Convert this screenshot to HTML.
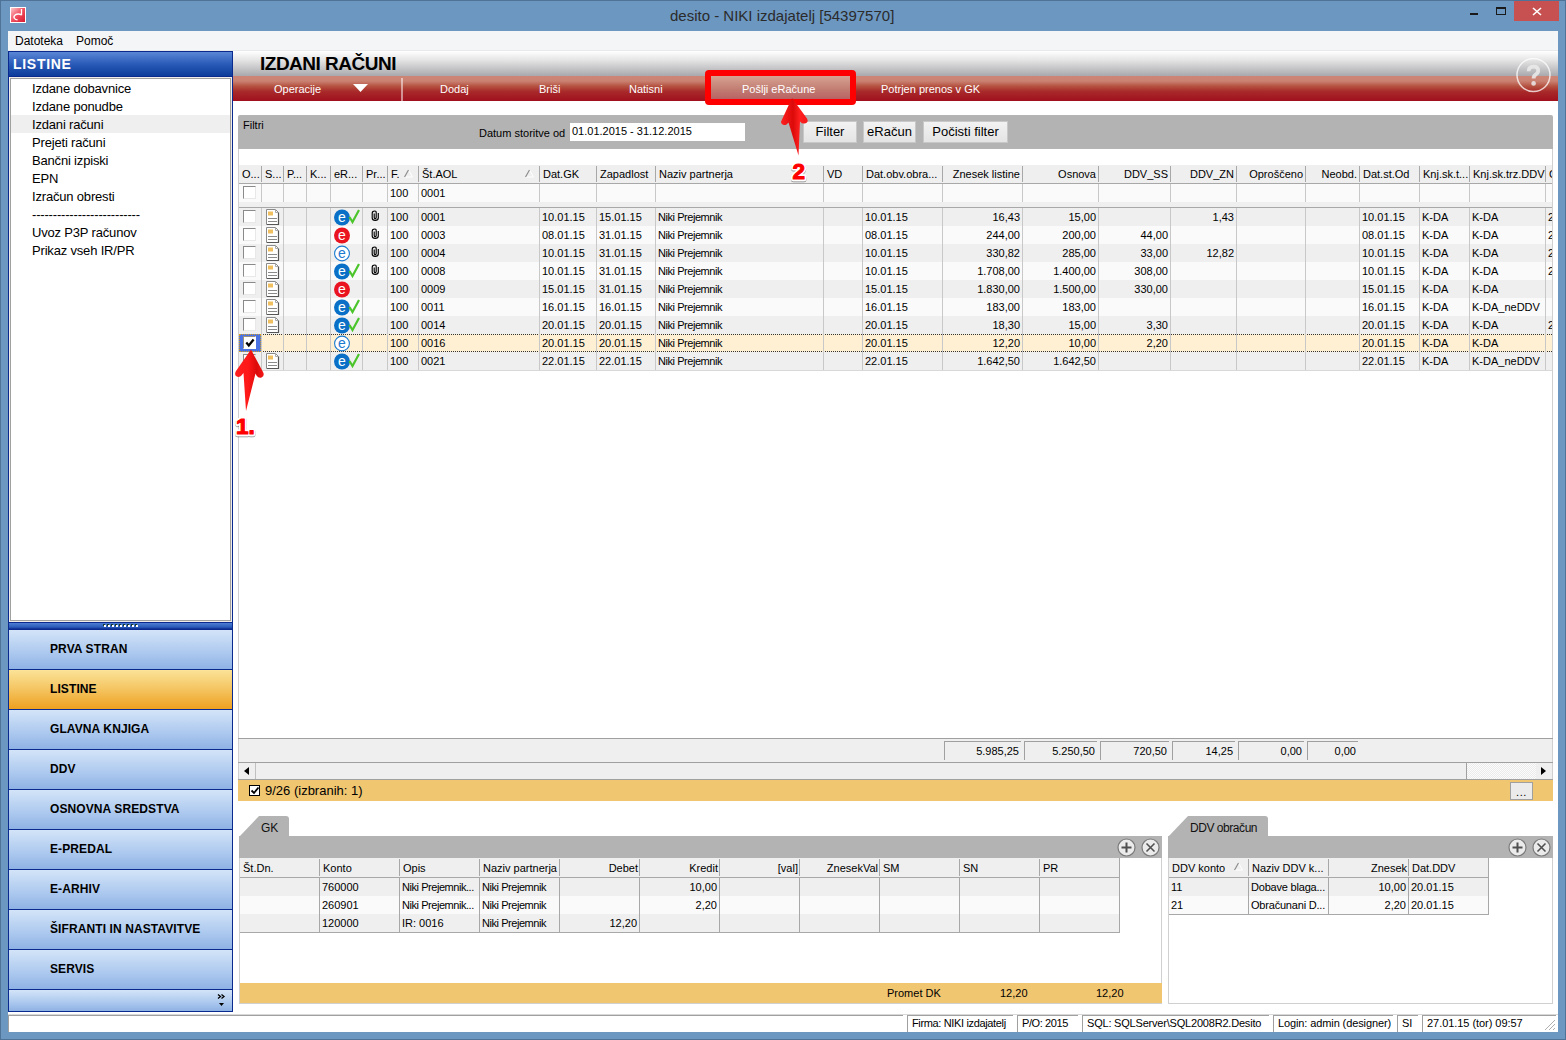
<!DOCTYPE html>
<html><head><meta charset="utf-8"><style>
*{box-sizing:border-box;margin:0;padding:0}
html,body{width:1566px;height:1040px;overflow:hidden}
body{position:relative;background:#6b97c1;font-family:"Liberation Sans",sans-serif;font-size:11px;color:#000}
.a{position:absolute}
.t{position:absolute;white-space:nowrap;line-height:1}
#outer{left:0;top:0;width:1566px;height:1040px;border:1px solid #4f7397}
#client{left:8px;top:31px;width:1550px;height:1001px;background:#fff}
#menubar{left:8px;top:31px;width:1550px;height:20px;background:#f4f5f7;border-bottom:1px solid #e8e9eb}
#lp{left:8px;top:51px;width:225px;height:961px;background:#0a2a90}
#lphead{left:9px;top:52px;width:223px;height:24px;background:linear-gradient(#5a86d6,#2a5bb8 50%,#0d3c9a)}
#lplist{left:9px;top:77px;width:223px;height:545px;background:#fff;border:1px solid #f0ede8}
#lpin{left:0;top:0;width:221px;height:543px;border:1px solid #a0a0a0}
.li{position:absolute;left:21px;font-size:13px;letter-spacing:-0.18px;line-height:18px;height:18px;white-space:nowrap}
#split{left:9px;top:623px;width:223px;height:7px;background:linear-gradient(#4c7fd4,#2a5ab8 60%,#0a2a90 86%,#0a2a90)}
.nb{position:absolute;left:9px;width:223px;height:39px;background:linear-gradient(#d3e4f8,#b2cdf0 50%,#8fb2e5);}
.nb span{position:absolute;left:41px;top:13px;font-weight:bold;font-size:12px;letter-spacing:0.1px;white-space:nowrap;line-height:1}
.nb.sel{background:linear-gradient(#fbe398,#f4c460 50%,#efa020)}
#mhead{left:233px;top:51px;width:1325px;height:25px;background:linear-gradient(#ffffff,#e6e6e6 35%,#a9a9ad)}
#redbar{left:233px;top:76px;width:1325px;height:25px;background:linear-gradient(#cd8676 0%,#ca8272 20%,#b4503f 42%,#a82a2a 62%,#a0101e 100%)}
.rb{position:absolute;top:84px;color:#fff;font-size:11px;white-space:nowrap;line-height:1}
.btn{position:absolute;top:121px;height:22px;background:linear-gradient(#f2f2f2,#e4e4e4);border:1px solid #c8c8c8;font-size:13px;text-align:center;line-height:20px}
.hc{position:absolute;top:166px;height:16px;font-size:11px;line-height:16px;white-space:nowrap;overflow:hidden;padding:0 3px}
.vl{position:absolute;width:1px;background:#c8c8c8}
.hl{position:absolute;height:1px;background:#a0a0a0}
.c{position:absolute;font-size:11px;line-height:18px;height:18px;white-space:nowrap;overflow:hidden;padding:0 2px}
.ch{padding:0 3px}
.tight{letter-spacing:-0.2px}
.np{letter-spacing:-0.45px}
.hc.r{padding-right:2px}
.ch.r{padding-right:1px}
.r{text-align:right}
.cb{position:absolute;width:13px;height:13px;background:#fff;border:1px solid #8a8a8a;border-right-color:#e8e8e8;border-bottom-color:#e8e8e8}
</style></head><body>
<div class="a" id="outer"></div>
<div class="a" id="client"></div>
<div class="a" style="left:10px;top:7px;width:16px;height:16px;background:#fff"></div>
<div class="a" style="left:11px;top:8px;width:14px;height:14px;background:linear-gradient(135deg,#ffc8cc,#f05060 50%,#d81830)"></div><svg class="a" style="left:10px;top:7px" width="16" height="16"><path d="M11.5 2V8.3M11.5 7.8Q8 6.2 5.2 7.9Q3.2 9.6 4.4 11.3Q5.4 12.6 7.6 12.9" fill="none" stroke="#fff" stroke-width="1.3"/></svg>
<div class="t" style="left:670px;top:8px;font-size:15px;color:#2b2b2b">desito - NIKI izdajatelj [54397570]</div>
<div class="a" style="left:1470px;top:13px;width:8px;height:2px;background:#1a1a1a"></div>
<div class="a" style="left:1496px;top:7px;width:10px;height:8px;border:1px solid #1a1a1a;border-top-width:2px"></div>
<div class="a" style="left:1514px;top:1px;width:45px;height:20px;background:#c75050"></div>
<svg class="a" style="left:1532px;top:7px" width="10" height="9"><path d="M1 1L9 8M9 1L1 8" stroke="#fff" stroke-width="1.6"/></svg>
<div class="a" id="menubar"></div>
<div class="t" style="left:15px;top:35px;font-size:12px">Datoteka</div>
<div class="t" style="left:76px;top:35px;font-size:12px">Pomoč</div>
<div class="a" id="lp"></div>
<div class="a" id="lphead"></div>
<div class="t" style="left:13px;top:57px;font-size:14px;font-weight:bold;color:#fff;letter-spacing:0.7px">LISTINE</div>
<div class="a" id="lplist"><div class="a" id="lpin">
 <div class="a" style="left:0;top:36px;width:219px;height:18px;background:#efefef"></div>
 <div class="li" style="top:1px">Izdane dobavnice</div>
 <div class="li" style="top:19px">Izdane ponudbe</div>
 <div class="li" style="top:37px">Izdani računi</div>
 <div class="li" style="top:55px">Prejeti računi</div>
 <div class="li" style="top:73px">Bančni izpiski</div>
 <div class="li" style="top:91px">EPN</div>
 <div class="li" style="top:109px">Izračun obresti</div>
 <div class="li" style="top:127px">--------------------------</div>
 <div class="li" style="top:145px">Uvoz P3P računov</div>
 <div class="li" style="top:163px">Prikaz vseh IR/PR</div>
</div></div>
<div class="a" id="split"></div>
<div class="nb" style="top:630px"><span>PRVA STRAN</span></div>
<div class="nb sel" style="top:670px"><span>LISTINE</span></div>
<div class="nb" style="top:710px"><span>GLAVNA KNJIGA</span></div>
<div class="nb" style="top:750px"><span>DDV</span></div>
<div class="nb" style="top:790px"><span>OSNOVNA SREDSTVA</span></div>
<div class="nb" style="top:830px"><span>E-PREDAL</span></div>
<div class="nb" style="top:870px"><span>E-ARHIV</span></div>
<div class="nb" style="top:910px"><span>ŠIFRANTI IN NASTAVITVE</span></div>
<div class="nb" style="top:950px"><span>SERVIS</span></div>
<div class="nb" style="top:990px;height:21px"></div>
<svg class="a" style="left:217px;top:993px" width="10" height="15"><path d="M1 1.5L3.5 3.5L1 5.5M4.5 1.5L7 3.5L4.5 5.5" fill="none" stroke="#000" stroke-width="1.3"/><path d="M2 10H7L4.5 13Z" fill="#000"/></svg>
<div class="a" style="left:103px;top:624px;width:2px;height:2px;background:#1a3a2a"></div><div class="a" style="left:104px;top:625px;width:2px;height:2px;background:#fff"></div><div class="a" style="left:107px;top:624px;width:2px;height:2px;background:#1a3a2a"></div><div class="a" style="left:108px;top:625px;width:2px;height:2px;background:#fff"></div><div class="a" style="left:111px;top:624px;width:2px;height:2px;background:#1a3a2a"></div><div class="a" style="left:112px;top:625px;width:2px;height:2px;background:#fff"></div><div class="a" style="left:115px;top:624px;width:2px;height:2px;background:#1a3a2a"></div><div class="a" style="left:116px;top:625px;width:2px;height:2px;background:#fff"></div><div class="a" style="left:119px;top:624px;width:2px;height:2px;background:#1a3a2a"></div><div class="a" style="left:120px;top:625px;width:2px;height:2px;background:#fff"></div><div class="a" style="left:123px;top:624px;width:2px;height:2px;background:#1a3a2a"></div><div class="a" style="left:124px;top:625px;width:2px;height:2px;background:#fff"></div><div class="a" style="left:127px;top:624px;width:2px;height:2px;background:#1a3a2a"></div><div class="a" style="left:128px;top:625px;width:2px;height:2px;background:#fff"></div><div class="a" style="left:131px;top:624px;width:2px;height:2px;background:#1a3a2a"></div><div class="a" style="left:132px;top:625px;width:2px;height:2px;background:#fff"></div><div class="a" style="left:135px;top:624px;width:2px;height:2px;background:#1a3a2a"></div><div class="a" style="left:136px;top:625px;width:2px;height:2px;background:#fff"></div>
<div class="a" id="mhead"></div>
<div class="t" style="left:260px;top:54px;font-size:19px;font-weight:bold;color:#000;letter-spacing:-0.5px">IZDANI RAČUNI</div>
<div class="a" id="redbar"></div>
<div class="rb" style="left:274px">Operacije</div>
<svg class="a" style="left:353px;top:84px" width="16" height="9"><path d="M0 0H15L7.5 8Z" fill="#fff"/></svg>
<div class="a" style="left:401px;top:78px;width:2px;height:23px;background:rgba(255,255,255,0.5)"></div>
<div class="rb" style="left:440px">Dodaj</div>
<div class="rb" style="left:539px">Briši</div>
<div class="rb" style="left:629px">Natisni</div>
<div class="rb" style="left:742px">Pošlji eRačune</div>
<div class="rb" style="left:881px">Potrjen prenos v GK</div>
<svg class="a" style="left:1516px;top:58px" width="36" height="36"><circle cx="17.5" cy="17" r="16.5" fill="none" stroke="rgba(255,255,255,0.75)" stroke-width="1.5"/><path d="M12.6 13.2Q12.6 8.6 17.5 8.6Q22.2 8.6 22.2 12.6Q22.2 15.2 19.6 16.6Q17.6 17.8 17.6 20.6" fill="none" stroke="rgba(235,235,235,0.85)" stroke-width="3.8" stroke-linecap="butt"/><circle cx="17.6" cy="25.4" r="2.3" fill="rgba(235,235,235,0.85)"/></svg>

<div class="a" style="left:238px;top:115px;width:1315px;height:34px;background:#b3b3b3;border-radius:2px 2px 0 0"></div>
<div class="t" style="left:243px;top:120px;font-size:11px">Filtri</div>
<div class="t" style="left:479px;top:128px;font-size:11px">Datum storitve od</div>
<div class="a" style="left:570px;top:123px;width:175px;height:18px;background:#fff"></div>
<div class="t" style="left:572px;top:126px;font-size:11px">01.01.2015 - 31.12.2015</div>
<div class="btn" style="left:803px;width:54px">Filter</div>
<div class="btn" style="left:863px;width:53px">eRačun</div>
<div class="btn" style="left:923px;width:85px">Počisti filter</div>

<div class="a" style="left:238px;top:149px;width:1315px;height:590px;border-left:1px solid #d0d0d0;border-right:1px solid #d0d0d0"></div>
<div class="a" style="left:239px;top:165px;width:1313px;height:18px;background:#efefef"></div>
<div class="hl" style="left:239px;top:183px;width:1313px;background:#a8a8a8"></div>
<div class="hc" style="left:239px;width:22px">O...</div>
<div class="hc" style="left:262px;width:21px">S...</div>
<div class="hc" style="left:284px;width:22px">P...</div>
<div class="hc" style="left:307px;width:23px">K...</div>
<div class="hc" style="left:331px;width:31px">eR...</div>
<div class="hc" style="left:363px;width:24px">Pr...</div>
<div class="hc" style="left:388px;width:30px">F.</div>
<div class="hc" style="left:419px;width:120px">Št.AOL</div>
<div class="hc" style="left:540px;width:56px">Dat.GK</div>
<div class="hc" style="left:597px;width:58px">Zapadlost</div>
<div class="hc" style="left:656px;width:167px">Naziv partnerja</div>
<div class="hc" style="left:824px;width:38px">VD</div>
<div class="hc" style="left:863px;width:79px">Dat.obv.obra...</div>
<div class="hc r" style="left:943px;width:79px">Znesek listine</div>
<div class="hc r" style="left:1023px;width:75px">Osnova</div>
<div class="hc r" style="left:1099px;width:71px">DDV_SS</div>
<div class="hc r" style="left:1171px;width:65px">DDV_ZN</div>
<div class="hc r" style="left:1237px;width:68px">Oproščeno</div>
<div class="hc r" style="left:1306px;width:53px">Neobd.</div>
<div class="hc" style="left:1360px;width:59px">Dat.st.Od</div>
<div class="hc" style="left:1420px;width:49px">Knj.sk.t...</div>
<div class="hc" style="left:1470px;width:75px">Knj.sk.trz.DDV</div>
<div class="hc" style="left:1546px;width:6px">C</div>
<div class="vl" style="left:261px;top:166px;height:16px;background:#a8a8a8"></div>
<div class="vl" style="left:283px;top:166px;height:16px;background:#a8a8a8"></div>
<div class="vl" style="left:306px;top:166px;height:16px;background:#a8a8a8"></div>
<div class="vl" style="left:330px;top:166px;height:16px;background:#a8a8a8"></div>
<div class="vl" style="left:362px;top:166px;height:16px;background:#a8a8a8"></div>
<div class="vl" style="left:387px;top:166px;height:16px;background:#a8a8a8"></div>
<div class="vl" style="left:418px;top:166px;height:16px;background:#a8a8a8"></div>
<div class="vl" style="left:539px;top:166px;height:16px;background:#a8a8a8"></div>
<div class="vl" style="left:596px;top:166px;height:16px;background:#a8a8a8"></div>
<div class="vl" style="left:655px;top:166px;height:16px;background:#a8a8a8"></div>
<div class="vl" style="left:823px;top:166px;height:16px;background:#a8a8a8"></div>
<div class="vl" style="left:862px;top:166px;height:16px;background:#a8a8a8"></div>
<div class="vl" style="left:942px;top:166px;height:16px;background:#a8a8a8"></div>
<div class="vl" style="left:1022px;top:166px;height:16px;background:#a8a8a8"></div>
<div class="vl" style="left:1098px;top:166px;height:16px;background:#a8a8a8"></div>
<div class="vl" style="left:1170px;top:166px;height:16px;background:#a8a8a8"></div>
<div class="vl" style="left:1236px;top:166px;height:16px;background:#a8a8a8"></div>
<div class="vl" style="left:1305px;top:166px;height:16px;background:#a8a8a8"></div>
<div class="vl" style="left:1359px;top:166px;height:16px;background:#a8a8a8"></div>
<div class="vl" style="left:1419px;top:166px;height:16px;background:#a8a8a8"></div>
<div class="vl" style="left:1469px;top:166px;height:16px;background:#a8a8a8"></div>
<div class="vl" style="left:1545px;top:166px;height:16px;background:#a8a8a8"></div>
<svg class="a" style="left:404px;top:169px" width="10" height="9"><path d="M0.5 8H8.5L4.5 1Z" fill="none" stroke="#fff" stroke-width="1"/><path d="M0.5 8L4.5 1" stroke="#8a8a8a" stroke-width="1.2"/></svg>
<svg class="a" style="left:525px;top:169px" width="10" height="9"><path d="M0.5 8H8.5L4.5 1Z" fill="none" stroke="#fff" stroke-width="1"/><path d="M0.5 8L4.5 1" stroke="#8a8a8a" stroke-width="1.2"/></svg>
<div class="a" style="left:239px;top:184px;width:1313px;height:18px;background:#fafafa"></div>
<div class="a" style="left:239px;top:202px;width:1313px;height:5px;background:#efefef"></div>
<div class="hl" style="left:239px;top:207px;width:1313px;background:#a8a8a8"></div>
<div class="vl" style="left:261px;top:184px;height:18px"></div>
<div class="vl" style="left:283px;top:184px;height:18px"></div>
<div class="vl" style="left:306px;top:184px;height:18px"></div>
<div class="vl" style="left:330px;top:184px;height:18px"></div>
<div class="vl" style="left:362px;top:184px;height:18px"></div>
<div class="vl" style="left:387px;top:184px;height:18px"></div>
<div class="vl" style="left:418px;top:184px;height:18px"></div>
<div class="vl" style="left:539px;top:184px;height:18px"></div>
<div class="vl" style="left:596px;top:184px;height:18px"></div>
<div class="vl" style="left:655px;top:184px;height:18px"></div>
<div class="vl" style="left:823px;top:184px;height:18px"></div>
<div class="vl" style="left:862px;top:184px;height:18px"></div>
<div class="vl" style="left:942px;top:184px;height:18px"></div>
<div class="vl" style="left:1022px;top:184px;height:18px"></div>
<div class="vl" style="left:1098px;top:184px;height:18px"></div>
<div class="vl" style="left:1170px;top:184px;height:18px"></div>
<div class="vl" style="left:1236px;top:184px;height:18px"></div>
<div class="vl" style="left:1305px;top:184px;height:18px"></div>
<div class="vl" style="left:1359px;top:184px;height:18px"></div>
<div class="vl" style="left:1419px;top:184px;height:18px"></div>
<div class="vl" style="left:1469px;top:184px;height:18px"></div>
<div class="vl" style="left:1545px;top:184px;height:18px"></div>
<div class="cb" style="left:243px;top:186px"></div>
<div class="c" style="left:388px;top:184px">100</div><div class="c" style="left:419px;top:184px">0001</div>
<div class="a" style="left:239px;top:208px;width:1313px;height:18px;background:#efefef"></div>
<div class="vl" style="left:261px;top:208px;height:18px"></div>
<div class="vl" style="left:283px;top:208px;height:18px"></div>
<div class="vl" style="left:306px;top:208px;height:18px"></div>
<div class="vl" style="left:330px;top:208px;height:18px"></div>
<div class="vl" style="left:362px;top:208px;height:18px"></div>
<div class="vl" style="left:387px;top:208px;height:18px"></div>
<div class="vl" style="left:418px;top:208px;height:18px"></div>
<div class="vl" style="left:539px;top:208px;height:18px"></div>
<div class="vl" style="left:596px;top:208px;height:18px"></div>
<div class="vl" style="left:655px;top:208px;height:18px"></div>
<div class="vl" style="left:823px;top:208px;height:18px"></div>
<div class="vl" style="left:862px;top:208px;height:18px"></div>
<div class="vl" style="left:942px;top:208px;height:18px"></div>
<div class="vl" style="left:1022px;top:208px;height:18px"></div>
<div class="vl" style="left:1098px;top:208px;height:18px"></div>
<div class="vl" style="left:1170px;top:208px;height:18px"></div>
<div class="vl" style="left:1236px;top:208px;height:18px"></div>
<div class="vl" style="left:1305px;top:208px;height:18px"></div>
<div class="vl" style="left:1359px;top:208px;height:18px"></div>
<div class="vl" style="left:1419px;top:208px;height:18px"></div>
<div class="vl" style="left:1469px;top:208px;height:18px"></div>
<div class="vl" style="left:1545px;top:208px;height:18px"></div>
<div class="cb" style="left:243px;top:210px"></div>
<svg class="a" style="left:266px;top:209px" width="14" height="17"><path d="M0.5 0.5H9.5L12.5 3.5V15.5H0.5Z" fill="#fff" stroke="#8a8a8a"/><path d="M1 15.5H12.5V3.5" fill="none" stroke="#555" stroke-width="1.2"/><path d="M9.5 0.5V3.5H12.5" fill="none" stroke="#aaa"/><rect x="2" y="2.5" width="5" height="4" fill="#f0c060"/><path d="M2 9.5H11M2 12.5H11" stroke="#8a8a8a"/></svg>
<svg class="a" style="left:334px;top:209px" width="28" height="17"><circle cx="8" cy="8.5" r="8" fill="#0a6fc6"/><text x="8" y="13" text-anchor="middle" font-family="Liberation Sans" font-size="14" fill="#fff">e</text><path d="M15.5 8L18.5 13L25 1" fill="none" stroke="#4cc52c" stroke-width="2.2"/></svg>
<svg class="a" style="left:371px;top:210px" width="9" height="12"><path d="M3.2 3.5V7.6Q3.2 8.6 4.2 8.6Q5.2 8.6 5.2 7.6V2.6Q5.2 1 3.9 1Q1.2 1 1.2 3.2V8Q1.2 10.4 4.2 10.4Q7.3 10.4 7.3 8V3" fill="none" stroke="#000" stroke-width="1.15"/></svg>
<div class="c" style="left:388px;top:208px;width:30px">100</div>
<div class="c" style="left:419px;top:208px;width:120px">0001</div>
<div class="c" style="left:540px;top:208px;width:56px">10.01.15</div>
<div class="c" style="left:597px;top:208px;width:58px">15.01.15</div>
<div class="c np" style="left:656px;top:208px;width:167px">Niki Prejemnik</div>
<div class="c" style="left:863px;top:208px;width:79px">10.01.15</div>
<div class="c r" style="left:943px;top:208px;width:79px">16,43</div>
<div class="c r" style="left:1023px;top:208px;width:75px">15,00</div>
<div class="c r" style="left:1171px;top:208px;width:65px">1,43</div>
<div class="c" style="left:1360px;top:208px;width:59px">10.01.15</div>
<div class="c" style="left:1420px;top:208px;width:49px">K-DA</div>
<div class="c" style="left:1470px;top:208px;width:75px">K-DA</div>
<div class="c" style="left:1546px;top:208px;width:6px">2</div>
<div class="a" style="left:239px;top:226px;width:1313px;height:18px;background:#fafafa"></div>
<div class="vl" style="left:261px;top:226px;height:18px"></div>
<div class="vl" style="left:283px;top:226px;height:18px"></div>
<div class="vl" style="left:306px;top:226px;height:18px"></div>
<div class="vl" style="left:330px;top:226px;height:18px"></div>
<div class="vl" style="left:362px;top:226px;height:18px"></div>
<div class="vl" style="left:387px;top:226px;height:18px"></div>
<div class="vl" style="left:418px;top:226px;height:18px"></div>
<div class="vl" style="left:539px;top:226px;height:18px"></div>
<div class="vl" style="left:596px;top:226px;height:18px"></div>
<div class="vl" style="left:655px;top:226px;height:18px"></div>
<div class="vl" style="left:823px;top:226px;height:18px"></div>
<div class="vl" style="left:862px;top:226px;height:18px"></div>
<div class="vl" style="left:942px;top:226px;height:18px"></div>
<div class="vl" style="left:1022px;top:226px;height:18px"></div>
<div class="vl" style="left:1098px;top:226px;height:18px"></div>
<div class="vl" style="left:1170px;top:226px;height:18px"></div>
<div class="vl" style="left:1236px;top:226px;height:18px"></div>
<div class="vl" style="left:1305px;top:226px;height:18px"></div>
<div class="vl" style="left:1359px;top:226px;height:18px"></div>
<div class="vl" style="left:1419px;top:226px;height:18px"></div>
<div class="vl" style="left:1469px;top:226px;height:18px"></div>
<div class="vl" style="left:1545px;top:226px;height:18px"></div>
<div class="cb" style="left:243px;top:228px"></div>
<svg class="a" style="left:266px;top:227px" width="14" height="17"><path d="M0.5 0.5H9.5L12.5 3.5V15.5H0.5Z" fill="#fff" stroke="#8a8a8a"/><path d="M1 15.5H12.5V3.5" fill="none" stroke="#555" stroke-width="1.2"/><path d="M9.5 0.5V3.5H12.5" fill="none" stroke="#aaa"/><rect x="2" y="2.5" width="5" height="4" fill="#f0c060"/><path d="M2 9.5H11M2 12.5H11" stroke="#8a8a8a"/></svg>
<svg class="a" style="left:334px;top:227px" width="17" height="17"><circle cx="8" cy="8.5" r="8" fill="#ea1421"/><text x="8" y="13" text-anchor="middle" font-family="Liberation Sans" font-size="14" fill="#fff">e</text></svg>
<svg class="a" style="left:371px;top:228px" width="9" height="12"><path d="M3.2 3.5V7.6Q3.2 8.6 4.2 8.6Q5.2 8.6 5.2 7.6V2.6Q5.2 1 3.9 1Q1.2 1 1.2 3.2V8Q1.2 10.4 4.2 10.4Q7.3 10.4 7.3 8V3" fill="none" stroke="#000" stroke-width="1.15"/></svg>
<div class="c" style="left:388px;top:226px;width:30px">100</div>
<div class="c" style="left:419px;top:226px;width:120px">0003</div>
<div class="c" style="left:540px;top:226px;width:56px">08.01.15</div>
<div class="c" style="left:597px;top:226px;width:58px">31.01.15</div>
<div class="c np" style="left:656px;top:226px;width:167px">Niki Prejemnik</div>
<div class="c" style="left:863px;top:226px;width:79px">08.01.15</div>
<div class="c r" style="left:943px;top:226px;width:79px">244,00</div>
<div class="c r" style="left:1023px;top:226px;width:75px">200,00</div>
<div class="c r" style="left:1099px;top:226px;width:71px">44,00</div>
<div class="c" style="left:1360px;top:226px;width:59px">08.01.15</div>
<div class="c" style="left:1420px;top:226px;width:49px">K-DA</div>
<div class="c" style="left:1470px;top:226px;width:75px">K-DA</div>
<div class="c" style="left:1546px;top:226px;width:6px">2</div>
<div class="a" style="left:239px;top:244px;width:1313px;height:18px;background:#efefef"></div>
<div class="vl" style="left:261px;top:244px;height:18px"></div>
<div class="vl" style="left:283px;top:244px;height:18px"></div>
<div class="vl" style="left:306px;top:244px;height:18px"></div>
<div class="vl" style="left:330px;top:244px;height:18px"></div>
<div class="vl" style="left:362px;top:244px;height:18px"></div>
<div class="vl" style="left:387px;top:244px;height:18px"></div>
<div class="vl" style="left:418px;top:244px;height:18px"></div>
<div class="vl" style="left:539px;top:244px;height:18px"></div>
<div class="vl" style="left:596px;top:244px;height:18px"></div>
<div class="vl" style="left:655px;top:244px;height:18px"></div>
<div class="vl" style="left:823px;top:244px;height:18px"></div>
<div class="vl" style="left:862px;top:244px;height:18px"></div>
<div class="vl" style="left:942px;top:244px;height:18px"></div>
<div class="vl" style="left:1022px;top:244px;height:18px"></div>
<div class="vl" style="left:1098px;top:244px;height:18px"></div>
<div class="vl" style="left:1170px;top:244px;height:18px"></div>
<div class="vl" style="left:1236px;top:244px;height:18px"></div>
<div class="vl" style="left:1305px;top:244px;height:18px"></div>
<div class="vl" style="left:1359px;top:244px;height:18px"></div>
<div class="vl" style="left:1419px;top:244px;height:18px"></div>
<div class="vl" style="left:1469px;top:244px;height:18px"></div>
<div class="vl" style="left:1545px;top:244px;height:18px"></div>
<div class="cb" style="left:243px;top:246px"></div>
<svg class="a" style="left:266px;top:245px" width="14" height="17"><path d="M0.5 0.5H9.5L12.5 3.5V15.5H0.5Z" fill="#fff" stroke="#8a8a8a"/><path d="M1 15.5H12.5V3.5" fill="none" stroke="#555" stroke-width="1.2"/><path d="M9.5 0.5V3.5H12.5" fill="none" stroke="#aaa"/><rect x="2" y="2.5" width="5" height="4" fill="#f0c060"/><path d="M2 9.5H11M2 12.5H11" stroke="#8a8a8a"/></svg>
<svg class="a" style="left:334px;top:245px" width="17" height="17"><circle cx="8" cy="8.5" r="7.4" fill="#fff" stroke="#1a7ad0" stroke-width="1.1"/><text x="8" y="13" text-anchor="middle" font-family="Liberation Sans" font-size="14" fill="#1a7ad0">e</text></svg>
<svg class="a" style="left:371px;top:246px" width="9" height="12"><path d="M3.2 3.5V7.6Q3.2 8.6 4.2 8.6Q5.2 8.6 5.2 7.6V2.6Q5.2 1 3.9 1Q1.2 1 1.2 3.2V8Q1.2 10.4 4.2 10.4Q7.3 10.4 7.3 8V3" fill="none" stroke="#000" stroke-width="1.15"/></svg>
<div class="c" style="left:388px;top:244px;width:30px">100</div>
<div class="c" style="left:419px;top:244px;width:120px">0004</div>
<div class="c" style="left:540px;top:244px;width:56px">10.01.15</div>
<div class="c" style="left:597px;top:244px;width:58px">31.01.15</div>
<div class="c np" style="left:656px;top:244px;width:167px">Niki Prejemnik</div>
<div class="c" style="left:863px;top:244px;width:79px">10.01.15</div>
<div class="c r" style="left:943px;top:244px;width:79px">330,82</div>
<div class="c r" style="left:1023px;top:244px;width:75px">285,00</div>
<div class="c r" style="left:1099px;top:244px;width:71px">33,00</div>
<div class="c r" style="left:1171px;top:244px;width:65px">12,82</div>
<div class="c" style="left:1360px;top:244px;width:59px">10.01.15</div>
<div class="c" style="left:1420px;top:244px;width:49px">K-DA</div>
<div class="c" style="left:1470px;top:244px;width:75px">K-DA</div>
<div class="c" style="left:1546px;top:244px;width:6px">2</div>
<div class="a" style="left:239px;top:262px;width:1313px;height:18px;background:#fafafa"></div>
<div class="vl" style="left:261px;top:262px;height:18px"></div>
<div class="vl" style="left:283px;top:262px;height:18px"></div>
<div class="vl" style="left:306px;top:262px;height:18px"></div>
<div class="vl" style="left:330px;top:262px;height:18px"></div>
<div class="vl" style="left:362px;top:262px;height:18px"></div>
<div class="vl" style="left:387px;top:262px;height:18px"></div>
<div class="vl" style="left:418px;top:262px;height:18px"></div>
<div class="vl" style="left:539px;top:262px;height:18px"></div>
<div class="vl" style="left:596px;top:262px;height:18px"></div>
<div class="vl" style="left:655px;top:262px;height:18px"></div>
<div class="vl" style="left:823px;top:262px;height:18px"></div>
<div class="vl" style="left:862px;top:262px;height:18px"></div>
<div class="vl" style="left:942px;top:262px;height:18px"></div>
<div class="vl" style="left:1022px;top:262px;height:18px"></div>
<div class="vl" style="left:1098px;top:262px;height:18px"></div>
<div class="vl" style="left:1170px;top:262px;height:18px"></div>
<div class="vl" style="left:1236px;top:262px;height:18px"></div>
<div class="vl" style="left:1305px;top:262px;height:18px"></div>
<div class="vl" style="left:1359px;top:262px;height:18px"></div>
<div class="vl" style="left:1419px;top:262px;height:18px"></div>
<div class="vl" style="left:1469px;top:262px;height:18px"></div>
<div class="vl" style="left:1545px;top:262px;height:18px"></div>
<div class="cb" style="left:243px;top:264px"></div>
<svg class="a" style="left:266px;top:263px" width="14" height="17"><path d="M0.5 0.5H9.5L12.5 3.5V15.5H0.5Z" fill="#fff" stroke="#8a8a8a"/><path d="M1 15.5H12.5V3.5" fill="none" stroke="#555" stroke-width="1.2"/><path d="M9.5 0.5V3.5H12.5" fill="none" stroke="#aaa"/><rect x="2" y="2.5" width="5" height="4" fill="#f0c060"/><path d="M2 9.5H11M2 12.5H11" stroke="#8a8a8a"/></svg>
<svg class="a" style="left:334px;top:263px" width="28" height="17"><circle cx="8" cy="8.5" r="8" fill="#0a6fc6"/><text x="8" y="13" text-anchor="middle" font-family="Liberation Sans" font-size="14" fill="#fff">e</text><path d="M15.5 8L18.5 13L25 1" fill="none" stroke="#4cc52c" stroke-width="2.2"/></svg>
<svg class="a" style="left:371px;top:264px" width="9" height="12"><path d="M3.2 3.5V7.6Q3.2 8.6 4.2 8.6Q5.2 8.6 5.2 7.6V2.6Q5.2 1 3.9 1Q1.2 1 1.2 3.2V8Q1.2 10.4 4.2 10.4Q7.3 10.4 7.3 8V3" fill="none" stroke="#000" stroke-width="1.15"/></svg>
<div class="c" style="left:388px;top:262px;width:30px">100</div>
<div class="c" style="left:419px;top:262px;width:120px">0008</div>
<div class="c" style="left:540px;top:262px;width:56px">10.01.15</div>
<div class="c" style="left:597px;top:262px;width:58px">31.01.15</div>
<div class="c np" style="left:656px;top:262px;width:167px">Niki Prejemnik</div>
<div class="c" style="left:863px;top:262px;width:79px">10.01.15</div>
<div class="c r" style="left:943px;top:262px;width:79px">1.708,00</div>
<div class="c r" style="left:1023px;top:262px;width:75px">1.400,00</div>
<div class="c r" style="left:1099px;top:262px;width:71px">308,00</div>
<div class="c" style="left:1360px;top:262px;width:59px">10.01.15</div>
<div class="c" style="left:1420px;top:262px;width:49px">K-DA</div>
<div class="c" style="left:1470px;top:262px;width:75px">K-DA</div>
<div class="c" style="left:1546px;top:262px;width:6px">2</div>
<div class="a" style="left:239px;top:280px;width:1313px;height:18px;background:#efefef"></div>
<div class="vl" style="left:261px;top:280px;height:18px"></div>
<div class="vl" style="left:283px;top:280px;height:18px"></div>
<div class="vl" style="left:306px;top:280px;height:18px"></div>
<div class="vl" style="left:330px;top:280px;height:18px"></div>
<div class="vl" style="left:362px;top:280px;height:18px"></div>
<div class="vl" style="left:387px;top:280px;height:18px"></div>
<div class="vl" style="left:418px;top:280px;height:18px"></div>
<div class="vl" style="left:539px;top:280px;height:18px"></div>
<div class="vl" style="left:596px;top:280px;height:18px"></div>
<div class="vl" style="left:655px;top:280px;height:18px"></div>
<div class="vl" style="left:823px;top:280px;height:18px"></div>
<div class="vl" style="left:862px;top:280px;height:18px"></div>
<div class="vl" style="left:942px;top:280px;height:18px"></div>
<div class="vl" style="left:1022px;top:280px;height:18px"></div>
<div class="vl" style="left:1098px;top:280px;height:18px"></div>
<div class="vl" style="left:1170px;top:280px;height:18px"></div>
<div class="vl" style="left:1236px;top:280px;height:18px"></div>
<div class="vl" style="left:1305px;top:280px;height:18px"></div>
<div class="vl" style="left:1359px;top:280px;height:18px"></div>
<div class="vl" style="left:1419px;top:280px;height:18px"></div>
<div class="vl" style="left:1469px;top:280px;height:18px"></div>
<div class="vl" style="left:1545px;top:280px;height:18px"></div>
<div class="cb" style="left:243px;top:282px"></div>
<svg class="a" style="left:266px;top:281px" width="14" height="17"><path d="M0.5 0.5H9.5L12.5 3.5V15.5H0.5Z" fill="#fff" stroke="#8a8a8a"/><path d="M1 15.5H12.5V3.5" fill="none" stroke="#555" stroke-width="1.2"/><path d="M9.5 0.5V3.5H12.5" fill="none" stroke="#aaa"/><rect x="2" y="2.5" width="5" height="4" fill="#f0c060"/><path d="M2 9.5H11M2 12.5H11" stroke="#8a8a8a"/></svg>
<svg class="a" style="left:334px;top:281px" width="17" height="17"><circle cx="8" cy="8.5" r="8" fill="#ea1421"/><text x="8" y="13" text-anchor="middle" font-family="Liberation Sans" font-size="14" fill="#fff">e</text></svg>
<div class="c" style="left:388px;top:280px;width:30px">100</div>
<div class="c" style="left:419px;top:280px;width:120px">0009</div>
<div class="c" style="left:540px;top:280px;width:56px">15.01.15</div>
<div class="c" style="left:597px;top:280px;width:58px">31.01.15</div>
<div class="c np" style="left:656px;top:280px;width:167px">Niki Prejemnik</div>
<div class="c" style="left:863px;top:280px;width:79px">15.01.15</div>
<div class="c r" style="left:943px;top:280px;width:79px">1.830,00</div>
<div class="c r" style="left:1023px;top:280px;width:75px">1.500,00</div>
<div class="c r" style="left:1099px;top:280px;width:71px">330,00</div>
<div class="c" style="left:1360px;top:280px;width:59px">15.01.15</div>
<div class="c" style="left:1420px;top:280px;width:49px">K-DA</div>
<div class="c" style="left:1470px;top:280px;width:75px">K-DA</div>
<div class="a" style="left:239px;top:298px;width:1313px;height:18px;background:#fafafa"></div>
<div class="vl" style="left:261px;top:298px;height:18px"></div>
<div class="vl" style="left:283px;top:298px;height:18px"></div>
<div class="vl" style="left:306px;top:298px;height:18px"></div>
<div class="vl" style="left:330px;top:298px;height:18px"></div>
<div class="vl" style="left:362px;top:298px;height:18px"></div>
<div class="vl" style="left:387px;top:298px;height:18px"></div>
<div class="vl" style="left:418px;top:298px;height:18px"></div>
<div class="vl" style="left:539px;top:298px;height:18px"></div>
<div class="vl" style="left:596px;top:298px;height:18px"></div>
<div class="vl" style="left:655px;top:298px;height:18px"></div>
<div class="vl" style="left:823px;top:298px;height:18px"></div>
<div class="vl" style="left:862px;top:298px;height:18px"></div>
<div class="vl" style="left:942px;top:298px;height:18px"></div>
<div class="vl" style="left:1022px;top:298px;height:18px"></div>
<div class="vl" style="left:1098px;top:298px;height:18px"></div>
<div class="vl" style="left:1170px;top:298px;height:18px"></div>
<div class="vl" style="left:1236px;top:298px;height:18px"></div>
<div class="vl" style="left:1305px;top:298px;height:18px"></div>
<div class="vl" style="left:1359px;top:298px;height:18px"></div>
<div class="vl" style="left:1419px;top:298px;height:18px"></div>
<div class="vl" style="left:1469px;top:298px;height:18px"></div>
<div class="vl" style="left:1545px;top:298px;height:18px"></div>
<div class="cb" style="left:243px;top:300px"></div>
<svg class="a" style="left:266px;top:299px" width="14" height="17"><path d="M0.5 0.5H9.5L12.5 3.5V15.5H0.5Z" fill="#fff" stroke="#8a8a8a"/><path d="M1 15.5H12.5V3.5" fill="none" stroke="#555" stroke-width="1.2"/><path d="M9.5 0.5V3.5H12.5" fill="none" stroke="#aaa"/><rect x="2" y="2.5" width="5" height="4" fill="#f0c060"/><path d="M2 9.5H11M2 12.5H11" stroke="#8a8a8a"/></svg>
<svg class="a" style="left:334px;top:299px" width="28" height="17"><circle cx="8" cy="8.5" r="8" fill="#0a6fc6"/><text x="8" y="13" text-anchor="middle" font-family="Liberation Sans" font-size="14" fill="#fff">e</text><path d="M15.5 8L18.5 13L25 1" fill="none" stroke="#4cc52c" stroke-width="2.2"/></svg>
<div class="c" style="left:388px;top:298px;width:30px">100</div>
<div class="c" style="left:419px;top:298px;width:120px">0011</div>
<div class="c" style="left:540px;top:298px;width:56px">16.01.15</div>
<div class="c" style="left:597px;top:298px;width:58px">16.01.15</div>
<div class="c np" style="left:656px;top:298px;width:167px">Niki Prejemnik</div>
<div class="c" style="left:863px;top:298px;width:79px">16.01.15</div>
<div class="c r" style="left:943px;top:298px;width:79px">183,00</div>
<div class="c r" style="left:1023px;top:298px;width:75px">183,00</div>
<div class="c" style="left:1360px;top:298px;width:59px">16.01.15</div>
<div class="c" style="left:1420px;top:298px;width:49px">K-DA</div>
<div class="c" style="left:1470px;top:298px;width:75px">K-DA_neDDV</div>
<div class="a" style="left:239px;top:316px;width:1313px;height:18px;background:#efefef"></div>
<div class="vl" style="left:261px;top:316px;height:18px"></div>
<div class="vl" style="left:283px;top:316px;height:18px"></div>
<div class="vl" style="left:306px;top:316px;height:18px"></div>
<div class="vl" style="left:330px;top:316px;height:18px"></div>
<div class="vl" style="left:362px;top:316px;height:18px"></div>
<div class="vl" style="left:387px;top:316px;height:18px"></div>
<div class="vl" style="left:418px;top:316px;height:18px"></div>
<div class="vl" style="left:539px;top:316px;height:18px"></div>
<div class="vl" style="left:596px;top:316px;height:18px"></div>
<div class="vl" style="left:655px;top:316px;height:18px"></div>
<div class="vl" style="left:823px;top:316px;height:18px"></div>
<div class="vl" style="left:862px;top:316px;height:18px"></div>
<div class="vl" style="left:942px;top:316px;height:18px"></div>
<div class="vl" style="left:1022px;top:316px;height:18px"></div>
<div class="vl" style="left:1098px;top:316px;height:18px"></div>
<div class="vl" style="left:1170px;top:316px;height:18px"></div>
<div class="vl" style="left:1236px;top:316px;height:18px"></div>
<div class="vl" style="left:1305px;top:316px;height:18px"></div>
<div class="vl" style="left:1359px;top:316px;height:18px"></div>
<div class="vl" style="left:1419px;top:316px;height:18px"></div>
<div class="vl" style="left:1469px;top:316px;height:18px"></div>
<div class="vl" style="left:1545px;top:316px;height:18px"></div>
<div class="cb" style="left:243px;top:318px"></div>
<svg class="a" style="left:266px;top:317px" width="14" height="17"><path d="M0.5 0.5H9.5L12.5 3.5V15.5H0.5Z" fill="#fff" stroke="#8a8a8a"/><path d="M1 15.5H12.5V3.5" fill="none" stroke="#555" stroke-width="1.2"/><path d="M9.5 0.5V3.5H12.5" fill="none" stroke="#aaa"/><rect x="2" y="2.5" width="5" height="4" fill="#f0c060"/><path d="M2 9.5H11M2 12.5H11" stroke="#8a8a8a"/></svg>
<svg class="a" style="left:334px;top:317px" width="28" height="17"><circle cx="8" cy="8.5" r="8" fill="#0a6fc6"/><text x="8" y="13" text-anchor="middle" font-family="Liberation Sans" font-size="14" fill="#fff">e</text><path d="M15.5 8L18.5 13L25 1" fill="none" stroke="#4cc52c" stroke-width="2.2"/></svg>
<div class="c" style="left:388px;top:316px;width:30px">100</div>
<div class="c" style="left:419px;top:316px;width:120px">0014</div>
<div class="c" style="left:540px;top:316px;width:56px">20.01.15</div>
<div class="c" style="left:597px;top:316px;width:58px">20.01.15</div>
<div class="c np" style="left:656px;top:316px;width:167px">Niki Prejemnik</div>
<div class="c" style="left:863px;top:316px;width:79px">20.01.15</div>
<div class="c r" style="left:943px;top:316px;width:79px">18,30</div>
<div class="c r" style="left:1023px;top:316px;width:75px">15,00</div>
<div class="c r" style="left:1099px;top:316px;width:71px">3,30</div>
<div class="c" style="left:1360px;top:316px;width:59px">20.01.15</div>
<div class="c" style="left:1420px;top:316px;width:49px">K-DA</div>
<div class="c" style="left:1470px;top:316px;width:75px">K-DA</div>
<div class="c" style="left:1546px;top:316px;width:6px">2</div>
<div class="a" style="left:239px;top:334px;width:1313px;height:18px;background:#fff0d4"></div>
<div class="a" style="left:239px;top:334px;width:1313px;height:18px;border-top:1px dotted #333;border-bottom:1px dotted #333"></div>
<div class="vl" style="left:261px;top:334px;height:18px"></div>
<div class="vl" style="left:283px;top:334px;height:18px"></div>
<div class="vl" style="left:306px;top:334px;height:18px"></div>
<div class="vl" style="left:330px;top:334px;height:18px"></div>
<div class="vl" style="left:362px;top:334px;height:18px"></div>
<div class="vl" style="left:387px;top:334px;height:18px"></div>
<div class="vl" style="left:418px;top:334px;height:18px"></div>
<div class="vl" style="left:539px;top:334px;height:18px"></div>
<div class="vl" style="left:596px;top:334px;height:18px"></div>
<div class="vl" style="left:655px;top:334px;height:18px"></div>
<div class="vl" style="left:823px;top:334px;height:18px"></div>
<div class="vl" style="left:862px;top:334px;height:18px"></div>
<div class="vl" style="left:942px;top:334px;height:18px"></div>
<div class="vl" style="left:1022px;top:334px;height:18px"></div>
<div class="vl" style="left:1098px;top:334px;height:18px"></div>
<div class="vl" style="left:1170px;top:334px;height:18px"></div>
<div class="vl" style="left:1236px;top:334px;height:18px"></div>
<div class="vl" style="left:1305px;top:334px;height:18px"></div>
<div class="vl" style="left:1359px;top:334px;height:18px"></div>
<div class="vl" style="left:1419px;top:334px;height:18px"></div>
<div class="vl" style="left:1469px;top:334px;height:18px"></div>
<div class="vl" style="left:1545px;top:334px;height:18px"></div>
<div class="a" style="left:239px;top:334px;width:22px;height:18px;background:#4a72e2;border:1px dotted #d8a020"></div>
<div class="a" style="left:243px;top:336px;width:13px;height:13px;background:#fff;border:1px solid #9a9080;border-right-color:#fff;border-bottom-color:#fff"></div>
<svg class="a" style="left:244px;top:337px" width="12" height="12"><path d="M2.3 5.6L4.8 8.4L9.6 2.6" fill="none" stroke="#000" stroke-width="2.3"/></svg>
<svg class="a" style="left:334px;top:335px" width="17" height="17"><circle cx="8" cy="8.5" r="7.4" fill="#fff" stroke="#1a7ad0" stroke-width="1.1"/><text x="8" y="13" text-anchor="middle" font-family="Liberation Sans" font-size="14" fill="#1a7ad0">e</text></svg>
<div class="c" style="left:388px;top:334px;width:30px">100</div>
<div class="c" style="left:419px;top:334px;width:120px">0016</div>
<div class="c" style="left:540px;top:334px;width:56px">20.01.15</div>
<div class="c" style="left:597px;top:334px;width:58px">20.01.15</div>
<div class="c np" style="left:656px;top:334px;width:167px">Niki Prejemnik</div>
<div class="c" style="left:863px;top:334px;width:79px">20.01.15</div>
<div class="c r" style="left:943px;top:334px;width:79px">12,20</div>
<div class="c r" style="left:1023px;top:334px;width:75px">10,00</div>
<div class="c r" style="left:1099px;top:334px;width:71px">2,20</div>
<div class="c" style="left:1360px;top:334px;width:59px">20.01.15</div>
<div class="c" style="left:1420px;top:334px;width:49px">K-DA</div>
<div class="c" style="left:1470px;top:334px;width:75px">K-DA</div>
<div class="a" style="left:239px;top:352px;width:1313px;height:18px;background:#efefef"></div>
<div class="vl" style="left:261px;top:352px;height:18px"></div>
<div class="vl" style="left:283px;top:352px;height:18px"></div>
<div class="vl" style="left:306px;top:352px;height:18px"></div>
<div class="vl" style="left:330px;top:352px;height:18px"></div>
<div class="vl" style="left:362px;top:352px;height:18px"></div>
<div class="vl" style="left:387px;top:352px;height:18px"></div>
<div class="vl" style="left:418px;top:352px;height:18px"></div>
<div class="vl" style="left:539px;top:352px;height:18px"></div>
<div class="vl" style="left:596px;top:352px;height:18px"></div>
<div class="vl" style="left:655px;top:352px;height:18px"></div>
<div class="vl" style="left:823px;top:352px;height:18px"></div>
<div class="vl" style="left:862px;top:352px;height:18px"></div>
<div class="vl" style="left:942px;top:352px;height:18px"></div>
<div class="vl" style="left:1022px;top:352px;height:18px"></div>
<div class="vl" style="left:1098px;top:352px;height:18px"></div>
<div class="vl" style="left:1170px;top:352px;height:18px"></div>
<div class="vl" style="left:1236px;top:352px;height:18px"></div>
<div class="vl" style="left:1305px;top:352px;height:18px"></div>
<div class="vl" style="left:1359px;top:352px;height:18px"></div>
<div class="vl" style="left:1419px;top:352px;height:18px"></div>
<div class="vl" style="left:1469px;top:352px;height:18px"></div>
<div class="vl" style="left:1545px;top:352px;height:18px"></div>
<div class="cb" style="left:243px;top:354px"></div>
<svg class="a" style="left:266px;top:353px" width="14" height="17"><path d="M0.5 0.5H9.5L12.5 3.5V15.5H0.5Z" fill="#fff" stroke="#8a8a8a"/><path d="M1 15.5H12.5V3.5" fill="none" stroke="#555" stroke-width="1.2"/><path d="M9.5 0.5V3.5H12.5" fill="none" stroke="#aaa"/><rect x="2" y="2.5" width="5" height="4" fill="#f0c060"/><path d="M2 9.5H11M2 12.5H11" stroke="#8a8a8a"/></svg>
<svg class="a" style="left:334px;top:353px" width="28" height="17"><circle cx="8" cy="8.5" r="8" fill="#0a6fc6"/><text x="8" y="13" text-anchor="middle" font-family="Liberation Sans" font-size="14" fill="#fff">e</text><path d="M15.5 8L18.5 13L25 1" fill="none" stroke="#4cc52c" stroke-width="2.2"/></svg>
<div class="c" style="left:388px;top:352px;width:30px">100</div>
<div class="c" style="left:419px;top:352px;width:120px">0021</div>
<div class="c" style="left:540px;top:352px;width:56px">22.01.15</div>
<div class="c" style="left:597px;top:352px;width:58px">22.01.15</div>
<div class="c np" style="left:656px;top:352px;width:167px">Niki Prejemnik</div>
<div class="c" style="left:863px;top:352px;width:79px">22.01.15</div>
<div class="c r" style="left:943px;top:352px;width:79px">1.642,50</div>
<div class="c r" style="left:1023px;top:352px;width:75px">1.642,50</div>
<div class="c" style="left:1360px;top:352px;width:59px">22.01.15</div>
<div class="c" style="left:1420px;top:352px;width:49px">K-DA</div>
<div class="c" style="left:1470px;top:352px;width:75px">K-DA_neDDV</div>
<div class="hl" style="left:239px;top:370px;width:1313px;background:#d8d8d8"></div>
<div class="hl" style="left:238px;top:738px;width:1315px;background:#a0a0a0"></div>
<div class="a" style="left:238px;top:739px;width:1315px;height:23px;background:#efefef;border-left:1px solid #d0d0d0;border-right:1px solid #d0d0d0"></div>
<div class="a" style="left:944px;top:741px;width:77px;height:19px;border-top:1px solid #a0a0a0;border-left:1px solid #a0a0a0"></div>
<div class="c r" style="left:944px;top:742px;width:77px">5.985,25</div>
<div class="a" style="left:1024px;top:741px;width:73px;height:19px;border-top:1px solid #a0a0a0;border-left:1px solid #a0a0a0"></div>
<div class="c r" style="left:1024px;top:742px;width:73px">5.250,50</div>
<div class="a" style="left:1100px;top:741px;width:69px;height:19px;border-top:1px solid #a0a0a0;border-left:1px solid #a0a0a0"></div>
<div class="c r" style="left:1100px;top:742px;width:69px">720,50</div>
<div class="a" style="left:1172px;top:741px;width:63px;height:19px;border-top:1px solid #a0a0a0;border-left:1px solid #a0a0a0"></div>
<div class="c r" style="left:1172px;top:742px;width:63px">14,25</div>
<div class="a" style="left:1238px;top:741px;width:66px;height:19px;border-top:1px solid #a0a0a0;border-left:1px solid #a0a0a0"></div>
<div class="c r" style="left:1238px;top:742px;width:66px">0,00</div>
<div class="a" style="left:1307px;top:741px;width:51px;height:19px;border-top:1px solid #a0a0a0;border-left:1px solid #a0a0a0"></div>
<div class="c r" style="left:1307px;top:742px;width:51px">0,00</div>
<div class="hl" style="left:238px;top:762px;width:1315px;background:#a0a0a0"></div>
<div class="a" style="left:238px;top:763px;width:1315px;height:17px;background:#efefef;border-left:1px solid #d0d0d0;border-right:1px solid #d0d0d0"></div>
<div class="a" style="left:255px;top:763px;width:1px;height:16px;background:#c0c0c0"></div>
<svg class="a" style="left:244px;top:767px" width="6" height="9"><path d="M5 0V8L0 4Z" fill="#000"/></svg>
<div class="a" style="left:1466px;top:763px;width:1px;height:16px;background:#a0a0a0"></div>
<div class="a" style="left:1467px;top:763px;width:69px;height:16px;background:repeating-conic-gradient(#ebebeb 0 25%,#fbfbfb 0 50%) 0 0/2px 2px"></div>
<svg class="a" style="left:1541px;top:767px" width="6" height="9"><path d="M0 0V8L5 4Z" fill="#000"/></svg>
<div class="hl" style="left:238px;top:779px;width:1315px;background:#a0a0a0"></div>
<div class="a" style="left:238px;top:780px;width:1315px;height:21px;background:#f0c671"></div>
<div class="a" style="left:249px;top:785px;width:11px;height:11px;background:#fff;border:1px solid #000"></div>
<svg class="a" style="left:250px;top:786px" width="10" height="10"><path d="M1.5 4.5L4 7L8.5 1.5" fill="none" stroke="#000" stroke-width="1.8"/></svg>
<div class="t" style="left:265px;top:784px;font-size:13px">9/26 (izbranih: 1)</div>
<div class="a" style="left:1510px;top:782px;width:23px;height:18px;background:#ebebeb;border:1px solid #a0a0a0"></div>
<div class="t" style="left:1516px;top:787px;font-size:11px;letter-spacing:0.6px">...</div>
<div class="a" style="left:239px;top:836px;width:923px;height:168px;border-left:1px solid #d0d0d0;border-right:1px solid #d0d0d0;border-bottom:1px solid #d0d0d0"></div>
<svg class="a" style="left:239px;top:816px" width="51" height="21"><path d="M0 21L20 0H47Q50 0 50 3V21Z" fill="#b3b3b3"/></svg><div class="t" style="left:261px;top:822px;font-size:12px;letter-spacing:0px;color:#111">GK</div>
<div class="a" style="left:239px;top:836px;width:923px;height:22px;background:#b3b3b3"></div>
<svg class="a" style="left:1117px;top:838px" width="19" height="19"><circle cx="9.5" cy="9.5" r="8.5" fill="#ebebeb" stroke="#7a7a7a" stroke-width="1.2"/><path d="M9.5 4.5V14.5M4.5 9.5H14.5" stroke="#505050" stroke-width="2"/></svg>
<svg class="a" style="left:1141px;top:838px" width="19" height="19"><circle cx="9.5" cy="9.5" r="8.5" fill="#ebebeb" stroke="#7a7a7a" stroke-width="1.2"/><path d="M5.5 5.5L13.5 13.5M13.5 5.5L5.5 13.5" stroke="#505050" stroke-width="1.6"/></svg>
<div class="a" style="left:240px;top:858px;width:880px;height:19px;background:#efefef"></div>
<div class="c ch" style="left:240px;top:859px;width:79px">Št.Dn.</div>
<div class="c ch" style="left:320px;top:859px;width:79px">Konto</div>
<div class="c ch" style="left:400px;top:859px;width:79px">Opis</div>
<div class="c ch" style="left:480px;top:859px;width:79px">Naziv partnerja</div>
<div class="c ch r" style="left:560px;top:859px;width:79px">Debet</div>
<div class="c ch r" style="left:640px;top:859px;width:79px">Kredit</div>
<div class="c ch r" style="left:720px;top:859px;width:79px">[val]</div>
<div class="c ch r" style="left:800px;top:859px;width:79px">ZnesekVal</div>
<div class="c ch" style="left:880px;top:859px;width:79px">SM</div>
<div class="c ch" style="left:960px;top:859px;width:79px">SN</div>
<div class="c ch" style="left:1040px;top:859px;width:79px">PR</div>
<div class="vl" style="left:319px;top:859px;height:17px;background:#a8a8a8"></div>
<div class="vl" style="left:399px;top:859px;height:17px;background:#a8a8a8"></div>
<div class="vl" style="left:479px;top:859px;height:17px;background:#a8a8a8"></div>
<div class="vl" style="left:559px;top:859px;height:17px;background:#a8a8a8"></div>
<div class="vl" style="left:639px;top:859px;height:17px;background:#a8a8a8"></div>
<div class="vl" style="left:719px;top:859px;height:17px;background:#a8a8a8"></div>
<div class="vl" style="left:799px;top:859px;height:17px;background:#a8a8a8"></div>
<div class="vl" style="left:879px;top:859px;height:17px;background:#a8a8a8"></div>
<div class="vl" style="left:959px;top:859px;height:17px;background:#a8a8a8"></div>
<div class="vl" style="left:1039px;top:859px;height:17px;background:#a8a8a8"></div>
<div class="vl" style="left:1119px;top:858px;height:74px;background:#a8a8a8"></div>
<div class="hl" style="left:240px;top:877px;width:880px;background:#a8a8a8"></div>
<div class="a" style="left:240px;top:878px;width:879px;height:18px;background:#efefef"></div>
<div class="vl" style="left:319px;top:878px;height:18px;background:#a8a8a8"></div>
<div class="vl" style="left:399px;top:878px;height:18px;background:#a8a8a8"></div>
<div class="vl" style="left:479px;top:878px;height:18px;background:#a8a8a8"></div>
<div class="vl" style="left:559px;top:878px;height:18px;background:#a8a8a8"></div>
<div class="vl" style="left:639px;top:878px;height:18px;background:#a8a8a8"></div>
<div class="vl" style="left:719px;top:878px;height:18px;background:#a8a8a8"></div>
<div class="vl" style="left:799px;top:878px;height:18px;background:#a8a8a8"></div>
<div class="vl" style="left:879px;top:878px;height:18px;background:#a8a8a8"></div>
<div class="vl" style="left:959px;top:878px;height:18px;background:#a8a8a8"></div>
<div class="vl" style="left:1039px;top:878px;height:18px;background:#a8a8a8"></div>
<div class="c" style="left:320px;top:878px;width:79px">760000</div>
<div class="c tight np" style="left:400px;top:878px;width:79px">Niki Prejemnik...</div>
<div class="c np" style="left:480px;top:878px;width:79px">Niki Prejemnik</div>
<div class="c r" style="left:640px;top:878px;width:79px">10,00</div>
<div class="a" style="left:240px;top:896px;width:879px;height:18px;background:#fafafa"></div>
<div class="vl" style="left:319px;top:896px;height:18px;background:#a8a8a8"></div>
<div class="vl" style="left:399px;top:896px;height:18px;background:#a8a8a8"></div>
<div class="vl" style="left:479px;top:896px;height:18px;background:#a8a8a8"></div>
<div class="vl" style="left:559px;top:896px;height:18px;background:#a8a8a8"></div>
<div class="vl" style="left:639px;top:896px;height:18px;background:#a8a8a8"></div>
<div class="vl" style="left:719px;top:896px;height:18px;background:#a8a8a8"></div>
<div class="vl" style="left:799px;top:896px;height:18px;background:#a8a8a8"></div>
<div class="vl" style="left:879px;top:896px;height:18px;background:#a8a8a8"></div>
<div class="vl" style="left:959px;top:896px;height:18px;background:#a8a8a8"></div>
<div class="vl" style="left:1039px;top:896px;height:18px;background:#a8a8a8"></div>
<div class="c" style="left:320px;top:896px;width:79px">260901</div>
<div class="c tight np" style="left:400px;top:896px;width:79px">Niki Prejemnik...</div>
<div class="c np" style="left:480px;top:896px;width:79px">Niki Prejemnik</div>
<div class="c r" style="left:640px;top:896px;width:79px">2,20</div>
<div class="a" style="left:240px;top:914px;width:879px;height:18px;background:#efefef"></div>
<div class="vl" style="left:319px;top:914px;height:18px;background:#a8a8a8"></div>
<div class="vl" style="left:399px;top:914px;height:18px;background:#a8a8a8"></div>
<div class="vl" style="left:479px;top:914px;height:18px;background:#a8a8a8"></div>
<div class="vl" style="left:559px;top:914px;height:18px;background:#a8a8a8"></div>
<div class="vl" style="left:639px;top:914px;height:18px;background:#a8a8a8"></div>
<div class="vl" style="left:719px;top:914px;height:18px;background:#a8a8a8"></div>
<div class="vl" style="left:799px;top:914px;height:18px;background:#a8a8a8"></div>
<div class="vl" style="left:879px;top:914px;height:18px;background:#a8a8a8"></div>
<div class="vl" style="left:959px;top:914px;height:18px;background:#a8a8a8"></div>
<div class="vl" style="left:1039px;top:914px;height:18px;background:#a8a8a8"></div>
<div class="c" style="left:320px;top:914px;width:79px">120000</div>
<div class="c" style="left:400px;top:914px;width:79px">IR: 0016</div>
<div class="c np" style="left:480px;top:914px;width:79px">Niki Prejemnik</div>
<div class="c r" style="left:560px;top:914px;width:79px">12,20</div>
<div class="hl" style="left:240px;top:932px;width:880px;background:#a8a8a8"></div>
<div class="a" style="left:240px;top:983px;width:922px;height:20px;background:#f0c671"></div>
<div class="t" style="left:887px;top:988px;font-size:11px">Promet DK</div>
<div class="t" style="left:1000px;top:988px;font-size:11px">12,20</div>
<div class="t" style="left:1096px;top:988px;font-size:11px">12,20</div>
<div class="a" style="left:1168px;top:836px;width:385px;height:168px;border-left:1px solid #d0d0d0;border-right:1px solid #d0d0d0;border-bottom:1px solid #d0d0d0"></div>
<svg class="a" style="left:1168px;top:816px" width="101" height="21"><path d="M0 21L20 0H97Q100 0 100 3V21Z" fill="#b3b3b3"/></svg><div class="t" style="left:1190px;top:822px;font-size:12px;letter-spacing:-0.45px;color:#111">DDV obračun</div>
<div class="a" style="left:1168px;top:836px;width:385px;height:22px;background:#b3b3b3"></div>
<svg class="a" style="left:1508px;top:838px" width="19" height="19"><circle cx="9.5" cy="9.5" r="8.5" fill="#ebebeb" stroke="#7a7a7a" stroke-width="1.2"/><path d="M9.5 4.5V14.5M4.5 9.5H14.5" stroke="#505050" stroke-width="2"/></svg>
<svg class="a" style="left:1532px;top:838px" width="19" height="19"><circle cx="9.5" cy="9.5" r="8.5" fill="#ebebeb" stroke="#7a7a7a" stroke-width="1.2"/><path d="M5.5 5.5L13.5 13.5M13.5 5.5L5.5 13.5" stroke="#505050" stroke-width="1.6"/></svg>
<div class="a" style="left:1169px;top:858px;width:320px;height:19px;background:#efefef"></div>
<div class="c ch" style="left:1169px;top:859px;width:79px">DDV konto</div>
<div class="c ch" style="left:1249px;top:859px;width:79px">Naziv DDV k...</div>
<div class="c ch r" style="left:1329px;top:859px;width:79px">Znesek</div>
<div class="c ch" style="left:1409px;top:859px;width:79px">Dat.DDV</div>
<div class="vl" style="left:1248px;top:859px;height:17px;background:#a8a8a8"></div>
<div class="vl" style="left:1328px;top:859px;height:17px;background:#a8a8a8"></div>
<div class="vl" style="left:1408px;top:859px;height:17px;background:#a8a8a8"></div>
<svg class="a" style="left:1234px;top:862px" width="10" height="9"><path d="M0.5 8H8.5L4.5 1Z" fill="none" stroke="#fff" stroke-width="1"/><path d="M0.5 8L4.5 1" stroke="#8a8a8a" stroke-width="1.2"/></svg>
<div class="vl" style="left:1488px;top:858px;height:56px;background:#a8a8a8"></div>
<div class="hl" style="left:1169px;top:877px;width:320px;background:#a8a8a8"></div>
<div class="a" style="left:1169px;top:878px;width:319px;height:18px;background:#efefef"></div>
<div class="vl" style="left:1248px;top:878px;height:18px;background:#a8a8a8"></div>
<div class="vl" style="left:1328px;top:878px;height:18px;background:#a8a8a8"></div>
<div class="vl" style="left:1408px;top:878px;height:18px;background:#a8a8a8"></div>
<div class="c" style="left:1169px;top:878px;width:79px">11</div>
<div class="c tight" style="left:1249px;top:878px;width:79px">Dobave blaga...</div>
<div class="c r" style="left:1329px;top:878px;width:79px">10,00</div>
<div class="c" style="left:1409px;top:878px;width:79px">20.01.15</div>
<div class="a" style="left:1169px;top:896px;width:319px;height:18px;background:#fafafa"></div>
<div class="vl" style="left:1248px;top:896px;height:18px;background:#a8a8a8"></div>
<div class="vl" style="left:1328px;top:896px;height:18px;background:#a8a8a8"></div>
<div class="vl" style="left:1408px;top:896px;height:18px;background:#a8a8a8"></div>
<div class="c" style="left:1169px;top:896px;width:79px">21</div>
<div class="c tight" style="left:1249px;top:896px;width:79px">Obračunani D...</div>
<div class="c r" style="left:1329px;top:896px;width:79px">2,20</div>
<div class="c" style="left:1409px;top:896px;width:79px">20.01.15</div>
<div class="hl" style="left:1169px;top:914px;width:320px;background:#a8a8a8"></div>
<div class="hl" style="left:8px;top:1014px;width:1550px;background:#d8d8d8"></div>
<div class="a" style="left:8px;top:1015px;width:895px;height:17px;border-top:1px solid #a0a0a0;border-left:1px solid #a0a0a0"></div>
<div class="a" style="left:907px;top:1015px;width:106px;height:17px;border-top:1px solid #a0a0a0;border-left:1px solid #a0a0a0"></div>
<div class="t" style="left:912px;top:1018px;font-size:11px;letter-spacing:-0.35px">Firma: NIKI izdajatelj</div>
<div class="a" style="left:1017px;top:1015px;width:61px;height:17px;border-top:1px solid #a0a0a0;border-left:1px solid #a0a0a0"></div>
<div class="t" style="left:1022px;top:1018px;font-size:11px;letter-spacing:-0.39px">P/O: 2015</div>
<div class="a" style="left:1082px;top:1015px;width:187px;height:17px;border-top:1px solid #a0a0a0;border-left:1px solid #a0a0a0"></div>
<div class="t" style="left:1087px;top:1018px;font-size:11px;letter-spacing:-0.2px">SQL: SQLServer\SQL2008R2.Desito</div>
<div class="a" style="left:1273px;top:1015px;width:120px;height:17px;border-top:1px solid #a0a0a0;border-left:1px solid #a0a0a0"></div>
<div class="t" style="left:1278px;top:1018px;font-size:11px;letter-spacing:-0.11px">Login: admin (designer)</div>
<div class="a" style="left:1397px;top:1015px;width:21px;height:17px;border-top:1px solid #a0a0a0;border-left:1px solid #a0a0a0"></div>
<div class="t" style="left:1402px;top:1018px;font-size:11px;letter-spacing:0px">SI</div>
<div class="a" style="left:1422px;top:1015px;width:134px;height:17px;border-top:1px solid #a0a0a0;border-left:1px solid #a0a0a0"></div>
<div class="t" style="left:1427px;top:1018px;font-size:11px;letter-spacing:-0.05px">27.01.15 (tor) 09:57</div>
<svg class="a" style="left:1544px;top:1019px" width="12" height="12"><path d="M11 1L1 11M11 5L5 11M11 9L9 11" stroke="#b0b0b0" stroke-width="1"/></svg>
<div class="a" style="left:708px;top:73px;width:144px;height:29px;background:linear-gradient(#dcab9a,#c07a70 60%,#b85a60)"></div>
<div class="rb" style="left:742px;top:84px">Pošlji eRačune</div>
<div class="a" style="left:705px;top:70px;width:151px;height:35px;border:6px solid #f00;border-radius:4px"></div>
<svg class="a" style="left:770px;top:95px" width="50" height="65"><defs><linearGradient id="ag" x1="0" x2="1" y1="0" y2="0"><stop offset="0" stop-color="#ff2020"/><stop offset="0.45" stop-color="#dc0a0a"/><stop offset="0.7" stop-color="#ff2020"/><stop offset="1" stop-color="#f41818"/></linearGradient></defs><path d="M22 3L37 23.5Q39 27.5 35 28.5Q32 29 30.5 27L30 26.5L28.5 60.5L18.5 27.5L16.5 29.5Q13.5 31 11.5 28.5Q10.5 26.5 12 24.5Z" fill="url(#ag)"/></svg>
<svg class="a" style="left:786px;top:156px" width="30" height="30"><text x="6.5" y="22.6" font-family="Liberation Sans" font-weight="bold" font-size="22.5" fill="#f00" stroke="#fff" stroke-width="4.5" stroke-linejoin="round" style="filter:drop-shadow(0 1px 0.6px rgba(0,0,0,0.35))">2</text><text x="6.5" y="22.6" font-family="Liberation Sans" font-weight="bold" font-size="22.5" fill="#f00" stroke="#f00" stroke-width="1.1" stroke-linejoin="round">2</text></svg>
<svg class="a" style="left:230px;top:345px" width="40" height="70"><defs><linearGradient id="ag2" x1="0" x2="1" y1="0" y2="0"><stop offset="0" stop-color="#ff2020"/><stop offset="0.45" stop-color="#ff1818"/><stop offset="0.75" stop-color="#dc0a0a"/><stop offset="1" stop-color="#f41818"/></linearGradient></defs><path d="M21 4.5L33 27Q35 31 31.5 32.5Q28.5 33.5 26.5 30.5L25.5 28.5L16 66L13.5 28L11 31Q7.5 33 5.5 30.5Q4.5 28.5 6 26Z" fill="url(#ag2)"/></svg>
<svg class="a" style="left:230px;top:411px" width="34" height="30"><text x="6" y="22.5" font-family="Liberation Sans" font-weight="bold" font-size="22.5" fill="#f00" stroke="#fff" stroke-width="4.5" stroke-linejoin="round" style="filter:drop-shadow(0 1px 0.6px rgba(0,0,0,0.35))">1.</text><text x="6" y="22.5" font-family="Liberation Sans" font-weight="bold" font-size="22.5" fill="#f00" stroke="#f00" stroke-width="1.1" stroke-linejoin="round">1.</text></svg>
</body></html>
